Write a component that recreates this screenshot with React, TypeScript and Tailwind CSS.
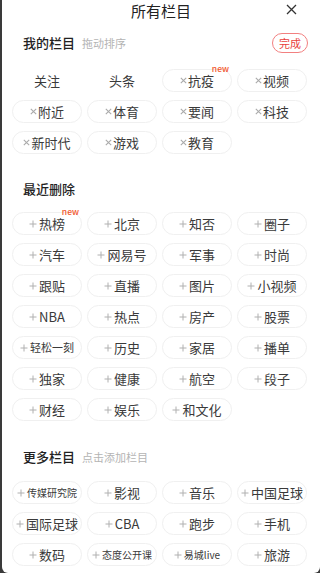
import React from 'react';

type Chip = { name: string; isNew?: boolean; size?: string };

const myChannels: Chip[] = [
  { name: '关注' },
  { name: '头条' },
  { name: '抗疫', isNew: true },
  { name: '视频' },
  { name: '附近' },
  { name: '体育' },
  { name: '要闻' },
  { name: '科技' },
  { name: '新时代' },
  { name: '游戏' },
  { name: '教育' },
];

const recentDeleted: Chip[] = [
  { name: '热榜', isNew: true },
  { name: '北京' },
  { name: '知否' },
  { name: '圈子' },
  { name: '汽车' },
  { name: '网易号' },
  { name: '军事' },
  { name: '时尚' },
  { name: '跟贴' },
  { name: '直播' },
  { name: '图片' },
  { name: '小视频' },
  { name: 'NBA' },
  { name: '热点' },
  { name: '房产' },
  { name: '股票' },
  { name: '轻松一刻', size: 'text-[11px]' },
  { name: '历史' },
  { name: '家居' },
  { name: '播单' },
  { name: '独家' },
  { name: '健康' },
  { name: '航空' },
  { name: '段子' },
  { name: '财经' },
  { name: '娱乐' },
  { name: '和文化' },
];

const moreChannels: Chip[] = [
  { name: '传媒研究院', size: 'text-[10px]' },
  { name: '影视' },
  { name: '音乐' },
  { name: '中国足球' },
  { name: '国际足球' },
  { name: 'CBA' },
  { name: '跑步' },
  { name: '手机' },
  { name: '数码' },
  { name: '态度公开课', size: 'text-[10px]' },
  { name: '易城live', size: 'text-[10px]' },
  { name: '旅游' },
];

const PlusIcon = () => (
  <svg width="8" height="8" viewBox="0 0 8 8" className="mr-[2px] shrink-0">
    <path d="M4 0.5V7.5M0.5 4H7.5" stroke="#b0b0b0" strokeWidth="1" />
  </svg>
);

const CrossIcon = () => (
  <svg width="7" height="7" viewBox="0 0 7 7" className="mr-[1px] shrink-0">
    <path d="M0.8 0.8L6.2 6.2M6.2 0.8L0.8 6.2" stroke="#aaaaaa" strokeWidth="1.1" />
  </svg>
);

const NewBadge = () => (
  <span className="absolute right-[2px] top-[-6px] text-[8.5px] leading-[8px] font-medium text-[#f2552c]">
    new
  </span>
);

// 栏目 칩 하나
const ChannelChip = ({ chip, mode }: { chip: Chip; mode: 'fixed' | 'remove' | 'add' }) => (
  <div
    className={`relative h-[23px] flex items-center justify-center rounded-full text-[#3a3a3a] ${
      mode === 'fixed' ? '' : 'border border-[#f0f0f0] bg-white'
    }`}
  >
    {mode === 'remove' && <CrossIcon />}
    {mode === 'add' && <PlusIcon />}
    <span className={`${chip.size || 'text-[13px]'} leading-none`}>{chip.name}</span>
    {chip.isNew && <NewBadge />}
  </div>
);

const SectionHeader = ({ title, hint, children }: { title: string; hint?: string; children?: React.ReactNode }) => (
  <div className="h-[20px] px-[21px] flex items-center">
    <h2 className="text-[13px] font-medium text-[#222]">{title}</h2>
    {hint && <span className="ml-[7px] text-[11px] text-[#b4b4b4]">{hint}</span>}
    {children}
  </div>
);

export default function App() {
  return (
    <div className="w-[320px] h-[573px] bg-[#3a3a3a] overflow-hidden" style={{ fontFamily: '"Noto Sans CJK SC", "Noto Sans", sans-serif' }}>
      <div className="ml-[2px] h-full bg-white rounded-b-[6px]">
        <header className="relative h-[20px] flex items-center justify-center">
          <h1 className="text-[15px] text-[#222] leading-none">所有栏目</h1>
          <svg width="11" height="11" viewBox="0 0 11 11" className="absolute right-[23px] top-[4px]">
            <path d="M1 1L10 10M10 1L1 10" stroke="#333" strokeWidth="1.3" />
          </svg>
        </header>

        <div className="mt-[13px]">
          <SectionHeader title="我的栏目" hint="拖动排序">
            <button className="ml-auto mr-[-9px] h-[20px] w-[36px] rounded-full border border-[#f28080] text-[11px] leading-none text-[#e8413e]">
              完成
            </button>
          </SectionHeader>
        </div>
        <div className="mt-[16px] pl-[10px] pr-[13px] grid grid-cols-4 gap-x-[5px] gap-y-[8px]">
          {myChannels.map((c, i) => (
            <ChannelChip key={c.name} chip={c} mode={i < 2 ? 'fixed' : 'remove'} />
          ))}
        </div>

        <div className="mt-[25px]">
          <SectionHeader title="最近删除" />
        </div>
        <div className="mt-[13px] pl-[10px] pr-[13px] grid grid-cols-4 gap-x-[5px] gap-y-[8px]">
          {recentDeleted.map((c) => (
            <ChannelChip key={c.name} chip={c} mode="add" />
          ))}
        </div>

        <div className="mt-[26px]">
          <SectionHeader title="更多栏目" hint="点击添加栏目" />
        </div>
        <div className="mt-[14px] pl-[10px] pr-[13px] grid grid-cols-4 gap-x-[5px] gap-y-[8px]">
          {moreChannels.map((c) => (
            <ChannelChip key={c.name} chip={c} mode="add" />
          ))}
        </div>
      </div>
    </div>
  );
}
